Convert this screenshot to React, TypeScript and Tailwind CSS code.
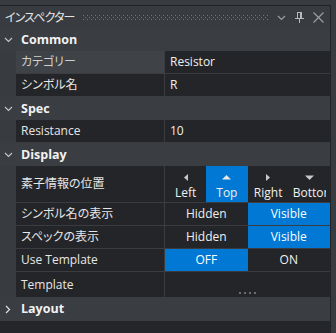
import React from "react";

const font = "font-['Segoe_UI','Open_Sans','Noto_Sans_CJK_JP',sans-serif] [font-feature-settings:'palt']";

function Chevron({ open }: { open: boolean }) {
  return (
    <div className="w-[16px] h-full flex items-center justify-center shrink-0">
      {open ? (
        <svg width="9" height="6" viewBox="0 0 9 6">
          <path d="M1 1 L4.5 4.5 L8 1" stroke="#c8c8c8" strokeWidth="1.1" fill="none" />
        </svg>
      ) : (
        <svg width="6" height="9" viewBox="0 0 6 9">
          <path d="M1 1 L4.5 4.5 L1 8" stroke="#e0e0e0" strokeWidth="1.2" fill="none" />
        </svg>
      )}
    </div>
  );
}

function Header({ title, open = true, h = "h-[23px]" }: { title: string; open?: boolean; h?: string }) {
  return (
    <div className={`${h} flex items-center bg-[#3a3d42]`}>
      <Chevron open={open} />
      <span className="pl-[5px] pt-[1px] text-[12.5px] font-bold text-[#f2f2f2]">{title}</span>
    </div>
  );
}

function Row({
  label,
  children,
  selected = false,
  h = "h-[23px]",
}: {
  label: string;
  children?: React.ReactNode;
  selected?: boolean;
  h?: string;
}) {
  return (
    <div className={`${h} flex pl-[16px]`}>
      <div className="flex flex-1 border-b border-[#3a3c40]">
        <div
          className={`w-[148px] flex items-center pl-[5px] text-[12px] ${
            selected ? "bg-[#3f4247] text-[#cfcfcf]" : "bg-[#242528] text-[#e6e6e6]"
          }`}
        >
          {label}
        </div>
        <div className="w-px bg-[#3a3c40]" />
        <div className="flex-1 flex bg-[#242528] text-[12px] text-[#f0f0f0]">{children}</div>
      </div>
    </div>
  );
}

function Text({ v }: { v: string }) {
  return <div className="flex items-center pl-[5px]">{v}</div>;
}

function Toggle({ options, active }: { options: string[]; active: number }) {
  return (
    <>
      {options.map((o, i) => (
        <div
          key={o}
          className={`flex-1 flex items-center justify-center ${i === active ? "bg-[#0078d4] text-white" : ""}`}
        >
          {o}
        </div>
      ))}
    </>
  );
}

function Arrow({ dir, active }: { dir: "l" | "u" | "r" | "d"; active: boolean }) {
  const c = active ? "#e8e8e8" : "#c8c8c8";
  if (dir === "l")
    return (
      <svg width="4" height="7" viewBox="0 0 4 7">
        <polygon points="4,0 0,3.5 4,7" fill={c} />
      </svg>
    );
  if (dir === "r")
    return (
      <svg width="4" height="7" viewBox="0 0 4 7">
        <polygon points="0,0 4,3.5 0,7" fill={c} />
      </svg>
    );
  if (dir === "u")
    return (
      <svg width="9" height="5" viewBox="0 0 9 5">
        <polygon points="0,4.5 4.5,0 9,4.5" fill={c} />
      </svg>
    );
  return (
    <svg width="9" height="5" viewBox="0 0 9 5">
      <polygon points="0,0.5 4.5,5 9,0.5" fill={c} />
    </svg>
  );
}

function Position() {
  const items: { label: string; dir: "l" | "u" | "r" | "d" }[] = [
    { label: "Left", dir: "l" },
    { label: "Top", dir: "u" },
    { label: "Right", dir: "r" },
    { label: "Bottom", dir: "d" },
  ];
  return (
    <>
      {items.map((it, i) => (
        <div
          key={it.label}
          className={`flex-1 min-w-0 flex flex-col items-center px-[4px] ${i === 1 ? "bg-[#0078d4]" : ""}`}
        >
          <div className="h-[17px] pt-[6px] flex items-center justify-center">
            <Arrow dir={it.dir} active={i === 1} />
          </div>
          <div className="w-full mt-[2px] text-center overflow-hidden whitespace-nowrap leading-[16px]">{it.label}</div>
        </div>
      ))}
    </>
  );
}

export default function App() {
  return (
    <div className={`w-[336px] h-[333px] overflow-hidden bg-[#383b40] flex flex-col ${font}`}>
      <div className="h-[5px] shrink-0" />
      <div className="flex flex-1 min-h-0">
        <div className="w-[331px] flex flex-col border-t border-r border-[#222326]">
          {/* title bar */}
          <div className="h-[23px] shrink-0 flex items-center pl-[5px] pr-[6px]">
            <span className="text-[12px] text-[#e6e6e6] tracking-[-0.9px]">インスペクター</span>
            <svg className="ml-[9px] flex-1" height="5">
              <defs>
                <pattern id="grip" width="4" height="4" patternUnits="userSpaceOnUse">
                  <rect x="0" y="0" width="1" height="1" fill="#74777c" />
                  <rect x="2" y="2" width="1" height="1" fill="#74777c" />
                </pattern>
              </defs>
              <rect width="100%" height="5" fill="url(#grip)" />
            </svg>
            <div className="flex items-center gap-[9px] ml-[8px]">
              <svg width="9" height="6" viewBox="0 0 9 6">
                <path d="M1 1 L4.5 4.5 L8 1" stroke="#9b9ea3" strokeWidth="1.2" fill="none" />
              </svg>
              <svg width="9" height="11" viewBox="0 0 9 11">
                <rect x="2.5" y="0.5" width="4" height="6" stroke="#b5b8bd" fill="none" />
                <rect x="5" y="1" width="1" height="5" fill="#b5b8bd" />
                <rect x="0" y="6" width="9" height="1" fill="#b5b8bd" />
                <rect x="4" y="7" width="1" height="4" fill="#b5b8bd" />
              </svg>
              <svg width="11" height="11" viewBox="0 0 11 11">
                <path d="M0.5 0.5 L10.5 10.5 M10.5 0.5 L0.5 10.5" stroke="#9b9ea3" strokeWidth="1.2" />
              </svg>
            </div>
          </div>

          <Header title="Common" h="h-[22px]" />
          <Row label="カテゴリー" selected>
            <Text v="Resistor" />
          </Row>
          <Row label="シンボル名">
            <Text v="R" />
          </Row>

          <Header title="Spec" />
          <Row label="Resistance">
            <Text v="10" />
          </Row>

          <Header title="Display" />
          <Row label="素子情報の位置" h="h-[37px]">
            <Position />
          </Row>
          <Row label="シンボル名の表示">
            <Toggle options={["Hidden", "Visible"]} active={1} />
          </Row>
          <Row label="スペックの表示">
            <Toggle options={["Hidden", "Visible"]} active={1} />
          </Row>
          <Row label="Use Template">
            <Toggle options={["OFF", "ON"]} active={0} />
          </Row>
          <div className="h-[25px] flex pl-[16px]">
            <div className="w-[148px] flex items-center pl-[5px] text-[12px] bg-[#242528] text-[#e6e6e6]">
              Template
            </div>
            <div className="w-px bg-[#3a3c40]" />
            <div className="flex-1 bg-[#242528] flex items-end justify-center pb-[3px]">
              <div className="flex gap-[3px]">
                <div className="w-[2px] h-[2px] bg-[#6a6c70]" />
                <div className="w-[2px] h-[2px] bg-[#6a6c70]" />
                <div className="w-[2px] h-[2px] bg-[#6a6c70]" />
                <div className="w-[2px] h-[2px] bg-[#6a6c70]" />
              </div>
            </div>
          </div>

          <Header title="Layout" open={false} h="h-[24px]" />
          <div className="flex-1 bg-[#252629]" />
        </div>
      </div>
    </div>
  );
}
